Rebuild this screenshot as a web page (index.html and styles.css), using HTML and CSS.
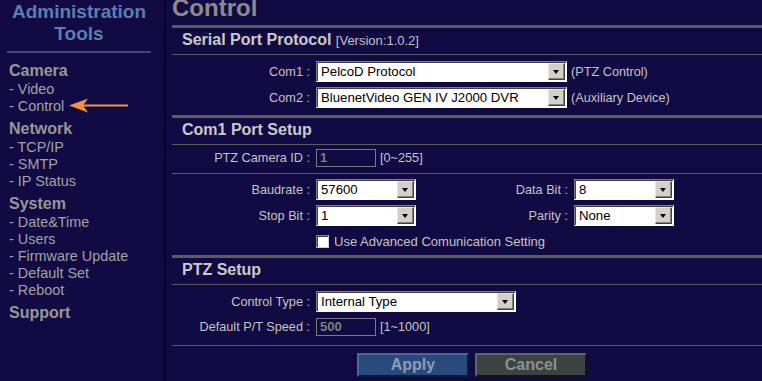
FILE: index.html
```html
<!DOCTYPE html>
<html>
<head>
<meta charset="utf-8">
<title>Control</title>
<link rel="stylesheet" href="styles.css">
</head>
<body>
<div class="page">
  <nav class="side">
    <div class="side-title">Administration<br>Tools</div>
    <div class="side-sep"></div>
    <div class="grp">
      <div class="grp-h">Camera</div>
      <div class="item">- Video</div>
      <div class="item">- Control</div>
    </div>
    <div class="grp">
      <div class="grp-h">Network</div>
      <div class="item">- TCP/IP</div>
      <div class="item">- SMTP</div>
      <div class="item">- IP Status</div>
    </div>
    <div class="grp">
      <div class="grp-h">System</div>
      <div class="item">- Date&amp;Time</div>
      <div class="item">- Users</div>
      <div class="item">- Firmware Update</div>
      <div class="item">- Default Set</div>
      <div class="item">- Reboot</div>
    </div>
    <div class="grp">
      <div class="grp-h">Support</div>
    </div>
    <svg class="arrow" width="62" height="18" viewBox="0 0 62 18">
      <line x1="12" y1="8.5" x2="60" y2="8.5" stroke="#f5913c" stroke-width="2"/>
      <polygon points="1,8.5 20,1.5 15,8.5 20,15.5" fill="#f5913c"/>
    </svg>
  </nav>

  <main class="main">
    <h1 class="title">Control</h1>

    <section class="sec">
      <div class="sec-h">Serial Port Protocol <span class="ver">[Version:1.0.2]</span></div>
      <div class="body b1">
        <div class="row">
          <span class="lbl">Com1 :</span>
          <div class="sel w-xl"><span class="val">PelcoD Protocol</span><span class="dd"></span></div>
          <span class="note">(PTZ Control)</span>
        </div>
        <div class="row">
          <span class="lbl">Com2 :</span>
          <div class="sel w-xl"><span class="val">BluenetVideo GEN IV J2000 DVR</span><span class="dd"></span></div>
          <span class="note">(Auxiliary Device)</span>
        </div>
      </div>
    </section>

    <section class="sec">
      <div class="sec-h">Com1 Port Setup</div>
      <div class="body b2a">
        <div class="row r18">
          <span class="lbl">PTZ Camera ID :</span>
          <div class="inp">1</div>
          <span class="note">[0~255]</span>
        </div>
      </div>
      <div class="body b2b">
        <div class="row">
          <span class="lbl">Baudrate :</span>
          <div class="sel w-s"><span class="val">57600</span><span class="dd"></span></div>
          <span class="lbl lbl2">Data Bit :</span>
          <div class="sel w-s"><span class="val">8</span><span class="dd"></span></div>
        </div>
        <div class="row">
          <span class="lbl">Stop Bit :</span>
          <div class="sel w-s"><span class="val">1</span><span class="dd"></span></div>
          <span class="lbl lbl2">Parity :</span>
          <div class="sel w-s"><span class="val">None</span><span class="dd"></span></div>
        </div>
        <div class="row rchk">
          <span class="lbl"></span>
          <span class="chk"></span>
          <span class="chk-t">Use Advanced Comunication Setting</span>
        </div>
      </div>
    </section>

    <section class="sec last">
      <div class="sec-h">PTZ Setup</div>
      <div class="body b3">
        <div class="row">
          <span class="lbl">Control Type :</span>
          <div class="sel w-m"><span class="val">Internal Type</span><span class="dd"></span></div>
        </div>
        <div class="row r18">
          <span class="lbl">Default P/T Speed :</span>
          <div class="inp">500</div>
          <span class="note">[1~1000]</span>
        </div>
      </div>
    </section>

    <div class="actions">
      <button class="btn apply">Apply</button>
      <button class="btn cancel">Cancel</button>
    </div>
  </main>
</div>
</body>
</html>
```
FILE: styles.css
```css
html, body {
  margin: 0;
  padding: 0;
  background: #110a42;
  font-family: "Liberation Sans", Arial, sans-serif;
  overflow: hidden;
}

.page {
  display: flex;
  height: 381px;
}

/* Sidebar */
.side {
  position: relative;
  width: 158px;
  padding-right: 6px;
  border-right: 2px solid #07042a;
  flex: none;
}

.side-title {
  padding-top: 1px;
  text-align: center;
  font-size: 19px;
  line-height: 22px;
  font-weight: bold;
  color: #5a7db2;
}

.side-sep {
  height: 2px;
  margin: 6px 7px 8px 7px;
  background: #45457a;
}

.grp {
  margin-top: 4px;
  padding-left: 9px;
}

.grp-h {
  font-size: 16px;
  line-height: 20px;
  font-weight: bold;
  color: #979797;
}

.item {
  font-size: 14.4px;
  line-height: 17px;
  color: #a2a2a2;
}

.arrow {
  position: absolute;
  left: 68px;
  top: 97px;
}

/* Main */
.main {
  flex: 1;
  padding-left: 6px;
  min-width: 0;
}

.title {
  margin: 0 0 9px 0;
  height: 16px;
  font-size: 24px;
  line-height: 16px;
  font-weight: bold;
  color: #8b8b8b;
}

.sec {
  border-top: 3px solid #5c5c5c;
}

.sec.last {
  border-bottom: 1px solid #5a5a5a;
}

.sec-h {
  box-sizing: border-box;
  height: 27px;
  padding: 2px 0 0 10px;
  font-size: 16px;
  line-height: 20px;
  font-weight: bold;
  color: #c9c9c9;
  border-bottom: 1px solid #5a5a5a;
}

.ver {
  font-size: 13px;
  font-weight: normal;
  color: #c2c2c2;
}

.body {
  display: flex;
  flex-direction: column;
}

.b1 {
  padding: 6px 0 7px;
  gap: 5px;
}

.b2a {
  padding: 4px 0 6px;
  border-bottom: 1px solid #5a5a5a;
}

.b2b {
  padding: 5px 0 5px;
  gap: 5px;
}

.b3 {
  padding: 6px 0 9px;
  gap: 6px;
}

.row {
  display: flex;
  align-items: center;
  height: 21px;
  font-size: 12.7px;
  color: #c4c4c4;
}

.row.r18 {
  height: 18px;
}

.row.rchk {
  height: 17px;
  margin-top: 2px;
}

.lbl {
  width: 138px;
  margin-right: 6px;
  text-align: right;
  white-space: nowrap;
  flex: none;
}

.lbl.lbl2 {
  width: 152px;
}

.note {
  margin-left: 4px;
  white-space: nowrap;
}

/* Select box */
.sel {
  box-sizing: border-box;
  display: flex;
  height: 21px;
  padding: 1px;
  background: #fff;
  border: 1px solid;
  border-color: #808080 #ffffff #ffffff #808080;
  box-shadow: inset 1px 1px 0 #404040;
  flex: none;
}

.w-xl { width: 251px; }
.w-m { width: 200px; }
.w-s { width: 100px; }

.val {
  flex: 1;
  padding-left: 3px;
  font-size: 13.2px;
  line-height: 17px;
  color: #000;
  white-space: nowrap;
  overflow: hidden;
}

.dd {
  position: relative;
  box-sizing: border-box;
  width: 17px;
  height: 17px;
  background: #d4d0c8;
  border: 1px solid;
  border-color: #e8e6e0 #404040 #404040 #e8e6e0;
  box-shadow: inset -1px -1px 0 #808080;
  flex: none;
}

.dd::after {
  content: "";
  position: absolute;
  left: 4px;
  top: 6px;
  border-left: 3.5px solid transparent;
  border-right: 3.5px solid transparent;
  border-top: 4px solid #000;
}

/* Text input (disabled look) */
.inp {
  box-sizing: border-box;
  width: 60px;
  height: 18px;
  padding-left: 3px;
  border: 1px solid #7a7a7a;
  font-size: 13px;
  line-height: 16px;
  font-weight: bold;
  color: #7e7e7e;
  flex: none;
}

/* Checkbox */
.chk {
  box-sizing: border-box;
  width: 13px;
  height: 13px;
  background: #fff;
  border: 1px solid;
  border-color: #808080 #d4d0c8 #d4d0c8 #808080;
  box-shadow: inset 1px 1px 0 #404040;
  flex: none;
}

.chk-t {
  margin-left: 5px;
  font-size: 13px;
  white-space: nowrap;
}

/* Buttons */
.actions {
  display: flex;
  justify-content: center;
  gap: 6px;
  margin-top: 7px;
  padding-left: 10px;
}

.btn {
  box-sizing: border-box;
  width: 112px;
  height: 24px;
  padding: 0;
  font-family: "Liberation Sans", Arial, sans-serif;
  font-size: 16px;
  font-weight: bold;
  line-height: 20px;
  border: 2px solid;
}

.apply {
  background: #28497b;
  color: #8f9db2;
  border-color: #4a6a9c #0b1a35 #0b1a35 #4a6a9c;
}

.cancel {
  background: #3a4341;
  color: #8c9190;
  border-color: #5c6664 #101312 #101312 #5c6664;
}
```
